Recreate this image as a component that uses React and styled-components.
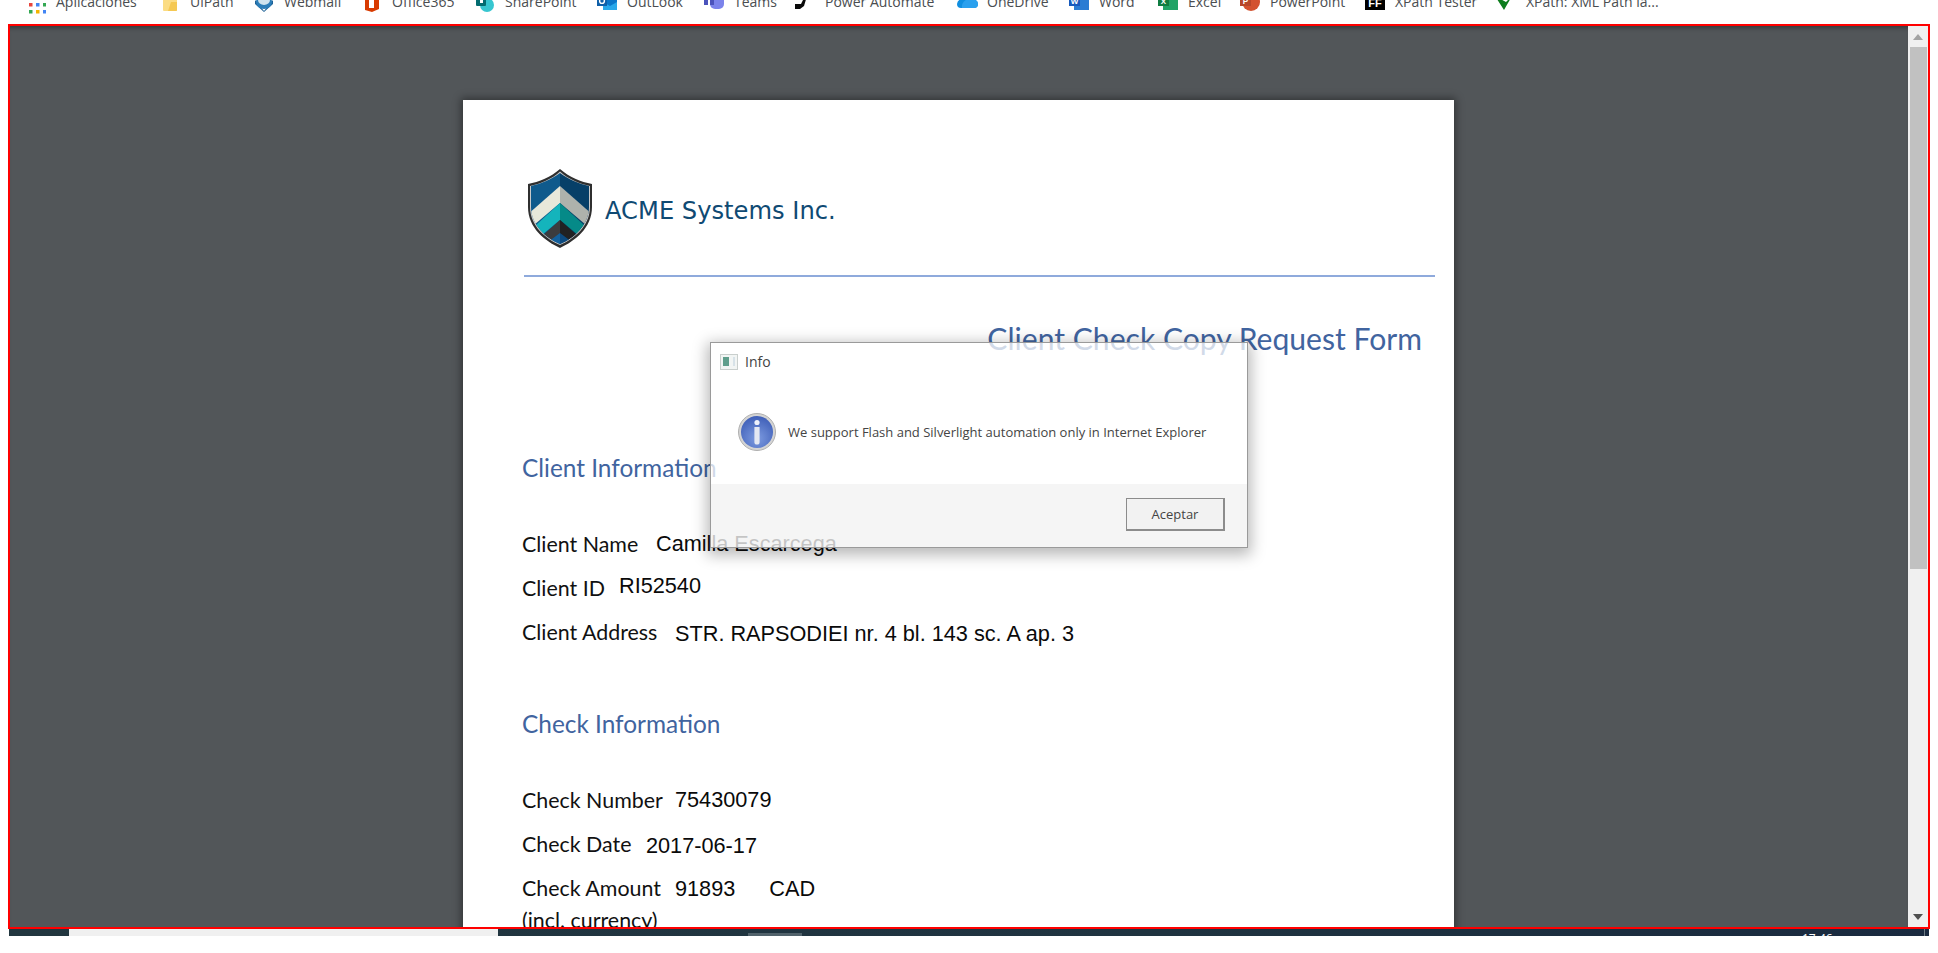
import React from 'react';
import styled, { createGlobalStyle } from 'styled-components';

const Global = createGlobalStyle`
  html, body {
    margin: 0;
    height: 953px;
    overflow: hidden;
    background: #ffffff;
  }
`;

const Screen = styled.div`
  width: 1938px;
  height: 953px;
  display: flex;
  flex-direction: column;
  background: #ffffff;
`;

/* ---------- bookmarks bar (cut at the top of the capture) ---------- */

const Bookmarks = styled.div`
  height: 24px;
  flex: none;
  overflow: hidden;
  display: flex;
  align-items: flex-end;
  padding: 0 0 12px 29px;
  box-sizing: border-box;
`;

const Bookmark = styled.div`
  flex: none;
  width: ${(p) => p.$w}px;
  display: flex;
  align-items: flex-end;
  gap: ${(p) => p.$gap || 10}px;
  font: 14px/20px 'Open Sans', sans-serif;
  color: #4a4d50;
  white-space: nowrap;
  svg { flex: none; margin-bottom: -2px; }
`;

const Apps = () => (
  <svg width="17" height="18" viewBox="0 0 17 18">
    {[['#e8453c', 0, 0], ['#f4b400', 7, 0], ['#f4b400', 14, 0], ['#e8453c', 0, 7], ['#4285f4', 7, 7], ['#34a853', 14, 7], ['#34a853', 0, 14], ['#f4b400', 7, 14], ['#4285f4', 14, 14]].map(([c, x, y]) => (
      <rect key={x + '-' + y} x={x} y={y} width="3.5" height="3.5" fill={c} />
    ))}
  </svg>
);
const Folder = () => (
  <svg width="16" height="18" viewBox="0 0 16 18"><path d="M1 0h14v14a1 1 0 0 1-1 1H2a1 1 0 0 1-1-1z" fill="#fbdc83" /><path d="M9 6h6v8a1 1 0 0 1-1 1H6z" fill="#f5c852" /></svg>
);
const Webmail = () => (
  <svg width="20" height="18" viewBox="0 0 20 18"><path d="M1 4l9 11 9-11v4l-9 8-9-8z" fill="#1c5f94" /><ellipse cx="10" cy="6" rx="8" ry="7" fill="#2b7db8" /><ellipse cx="10" cy="4" rx="6" ry="5" fill="#cfe3ee" /></svg>
);
const Office = () => (
  <svg width="16" height="18" viewBox="0 0 16 18"><path d="M1 0h14v13l-7 3-7-2z" fill="#d83b01" /><path d="M5 0h5v12H5z" fill="#ffffff" /></svg>
);
const SharePoint = () => (
  <svg width="20" height="18" viewBox="0 0 20 18"><circle cx="12" cy="9" r="7" fill="#37c6d0" /><rect x="1" y="0" width="10" height="10" rx="1" fill="#036c70" /><rect x="5" y="3" width="3" height="4" fill="#ffffff" /></svg>
);
const Outlook = () => (
  <svg width="20" height="18" viewBox="0 0 20 18"><rect x="6" y="0" width="14" height="14" fill="#0a76c9" /><path d="M6 6l7 4 7-4v8H6z" fill="#28a8ea" /><rect x="0" y="0" width="10" height="10" fill="#0f5fa8" /><circle cx="5" cy="5" r="2.4" fill="none" stroke="#fff" strokeWidth="1.4" /></svg>
);
const Teams = () => (
  <svg width="20" height="18" viewBox="0 0 20 18"><path d="M6 0h14v8a5 5 0 0 1-5 5h-4a5 5 0 0 1-5-5z" fill="#7b83eb" /><rect x="0" y="0" width="10" height="9" fill="#4b53bc" /><rect x="4" y="2" width="2" height="7" fill="#ffffff" /></svg>
);
const Automate = () => (
  <svg width="20" height="18" viewBox="0 0 20 18"><path d="M0 8h6l4-8h2L9 10 5 13H0z" fill="#0a0a0a" /><rect x="14" y="0" width="5" height="2" fill="#9aa0a6" /></svg>
);
const OneDrive = () => (
  <svg width="21" height="18" viewBox="0 0 21 18"><path d="M0 8a6 6 0 0 1 6-5h9a6 6 0 0 1 6 5 4 4 0 0 1-4 4H4a4 4 0 0 1-4-4z" fill="#0f8ee0" /><path d="M5 12a8 8 0 0 1 12-8h1a4 4 0 0 1 3 4 4 4 0 0 1-4 4z" fill="#2aa0ee" /></svg>
);
const Sheet = ({ back, front, letter }) => (
  <svg width="20" height="18" viewBox="0 0 20 18">
    <rect x="5" y="0" width="15" height="14" fill={back} />
    <rect x="0" y="0" width="11" height="10" fill={front} />
    <text x="5.5" y="8" fontSize="8" fontWeight="700" fontFamily="Liberation Sans, sans-serif" textAnchor="middle" fill="#fff">{letter}</text>
  </svg>
);
const Powerpoint = () => (
  <svg width="20" height="18" viewBox="0 0 20 18"><circle cx="11" cy="6" r="9" fill="#d35230" /><rect x="0" y="0" width="11" height="10" fill="#b7472a" /><text x="5.5" y="8" fontSize="8" fontWeight="700" fontFamily="Liberation Sans, sans-serif" textAnchor="middle" fill="#fff">P</text></svg>
);
const FF = () => (
  <svg width="20" height="18" viewBox="0 0 20 18"><rect width="20" height="14" fill="#000" /><text x="10" y="11" fontSize="11" fontWeight="700" fontFamily="Liberation Sans, sans-serif" textAnchor="middle" fill="#fff">FF</text></svg>
);
const Leaf = () => (
  <svg width="19" height="18" viewBox="0 0 19 18"><path d="M0 0l9 14L17 0l-6 6z" fill="#0d7d1d" /></svg>
);

const bookmarks = [
  { icon: <Apps />, text: 'Aplicaciones', w: 133 },
  { icon: <Folder />, text: 'UiPath', w: 92, gap: 12 },
  { icon: <Webmail />, text: 'Webmail', w: 110 },
  { icon: <Office />, text: 'Office365', w: 111, gap: 12 },
  { icon: <SharePoint />, text: 'SharePoint', w: 122 },
  { icon: <Outlook />, text: 'OutLook', w: 107 },
  { icon: <Teams />, text: 'Teams', w: 91 },
  { icon: <Automate />, text: 'Power Automate', w: 162 },
  { icon: <OneDrive />, text: 'OneDrive', w: 112, gap: 9 },
  { icon: <Sheet back="#2b7cd3" front="#185abd" letter="W" />, text: 'Word', w: 89 },
  { icon: <Sheet back="#21a366" front="#107c41" letter="X" />, text: 'Excel', w: 82 },
  { icon: <Powerpoint />, text: 'PowerPoint', w: 125 },
  { icon: <FF />, text: 'XPath Tester', w: 130 },
  { icon: <Leaf />, text: 'XPath: XML Path la...', w: 150, gap: 12 },
];

/* ---------- red frame with the pdf viewer ---------- */

const Frame = styled.div`
  flex: none;
  width: 1922px;
  height: 905px;
  margin-left: 8px;
  box-sizing: border-box;
  border: 2px solid #ff0000;
  display: flex;
  position: relative;
  overflow: hidden;
`;

const Viewer = styled.div`
  flex: 1;
  background: #525659;
  box-shadow: inset 0 5px 4px -3px rgba(0, 0, 0, 0.35);
  overflow: hidden;
  display: flex;
  justify-content: center;
  align-items: flex-start;
`;

const Paper = styled.div`
  flex: none;
  width: 991px;
  height: 1300px;
  margin: 74px 1px 0 0;
  padding: 69px 0 0 59px;
  box-sizing: border-box;
  background: #ffffff;
  box-shadow: 0 0 8px 2px rgba(0, 0, 0, 0.4);
`;

const Brand = styled.div`
  display: flex;
  align-items: center;
  gap: 12px;
  margin-left: 5px;
  height: 79px;
`;

const BrandName = styled.div`
  font: 24.2px 'DejaVu Sans', sans-serif;
  color: #0f4a73;
  margin-top: 4px;
`;

const Rule = styled.div`
  width: 911px;
  height: 2px;
  margin: 27px 0 0 2px;
  background: #8faadc;
`;

const FormTitle = styled.div`
  width: 900px;
  margin-top: 43px;
  text-align: right;
  font: 400 30.1px/36px Lato, sans-serif;
  color: #41649f;
`;

const SectionTitle = styled.div`
  margin-top: ${(p) => p.$top}px;
  font: 400 24.4px/30px Lato, sans-serif;
  color: #41649f;
`;

const Row = styled.div`
  display: flex;
  align-items: flex-start;
  height: ${(p) => p.$h || 44}px;
  margin-top: ${(p) => p.$top || 0}px;
`;

const Label = styled.div`
  width: ${(p) => p.$w}px;
  flex: none;
  font: 21.4px/30px Lato, sans-serif;
  color: #111111;
  white-space: nowrap;
`;

const LabelNote = styled.span`
  display: block;
  margin-top: 2px;
`;

const Value = styled.div`
  font: 21.7px/24px 'Liberation Sans', sans-serif;
  color: #0a0a0a;
  white-space: nowrap;
  margin-top: ${(p) => p.$lift || 0}px;
`;

const Currency = styled.span`
  margin-left: 34px;
`;

/* ---------- scrollbar ---------- */

const Scrollbar = styled.div`
  flex: none;
  width: 20px;
  background: #f0f0f0;
  display: flex;
  flex-direction: column;
  align-items: center;
`;

const ArrowBox = styled.div`
  flex: none;
  height: 21px;
  display: flex;
  align-items: center;
  justify-content: center;
  margin-top: ${(p) => (p.$bottom ? 'auto' : 0)};
`;

const Thumb = styled.div`
  flex: none;
  width: 17px;
  height: 522px;
  background: #c1c1c1;
`;

const Arrow = ({ down }) => (
  <svg width="10" height="6" viewBox="0 0 10 6">
    <path d={down ? 'M0 0h10L5 6z' : 'M0 6h10L5 0z'} fill={down ? '#505050' : '#a3a3a3'} />
  </svg>
);

/* ---------- message box ---------- */

const Dialog = styled.div`
  position: absolute;
  left: 700px;
  top: 316px;
  width: 538px;
  height: 206px;
  box-sizing: border-box;
  border: 1px solid #9a9a9a;
  box-shadow: 0 4px 14px 3px rgba(0, 0, 0, 0.28);
  display: flex;
  flex-direction: column;
  font-family: 'Open Sans', sans-serif;
  color: #444444;
`;

const DialogBody = styled.div`
  flex: 1;
  background: rgba(255, 255, 255, 0.76);
  padding: 10px 0 0 9px;
`;

const DialogTitle = styled.div`
  display: flex;
  align-items: center;
  gap: 7px;
  font-size: 14px;
  line-height: 18px;
`;

const Message = styled.div`
  display: flex;
  align-items: center;
  gap: 12px;
  margin: 42px 0 0 18px;
  font-size: 13px;
`;

const DialogFooter = styled.div`
  flex: none;
  height: 63px;
  background: rgba(242, 242, 242, 0.8);
  display: flex;
  justify-content: flex-end;
  align-items: flex-start;
  padding: 14px 22px 0 0;
  box-sizing: border-box;
`;

const AcceptButton = styled.button`
  width: 99px;
  height: 33px;
  box-sizing: border-box;
  border: 1px solid #8c8c8c;
  border-right-width: 2px;
  border-bottom-width: 2px;
  background: #f2f2f2;
  font: 13px 'Open Sans', sans-serif;
  color: #444444;
  padding: 0;
`;

const WindowIcon = () => (
  <svg width="18" height="16" viewBox="0 0 18 16">
    <rect x="0.5" y="0.5" width="17" height="15" fill="#f2f5f4" stroke="#c9cfcd" />
    <rect x="3" y="3" width="6" height="9" fill="#5f9e8c" />
    <rect x="13" y="3" width="2" height="9" fill="#d7e2e8" />
  </svg>
);

const InfoIcon = () => (
  <svg width="38" height="38" viewBox="0 0 38 38">
    <defs>
      <radialGradient id="infoFill" cx="50%" cy="70%" r="70%">
        <stop offset="0" stopColor="#7d9be0" />
        <stop offset="1" stopColor="#3f5fb8" />
      </radialGradient>
    </defs>
    <circle cx="19" cy="19" r="18.5" fill="#d4d4d4" stroke="#b0b0b0" />
    <circle cx="19" cy="19" r="16" fill="url(#infoFill)" />
    <circle cx="19" cy="9.5" r="2.6" fill="#eef2fb" />
    <path d="M16.4 14h5.2v15a2.6 2.6 0 0 1-5.2 0z" fill="#e4e8f2" />
  </svg>
);

/* ---------- taskbar, only a sliver of it shows ---------- */

const Taskbar = styled.div`
  flex: none;
  width: 1920px;
  height: 7px;
  margin-left: 9px;
  display: flex;
  overflow: hidden;
  background: linear-gradient(90deg, #22363f, #1f3340 60%, #1a2a40);
`;

const SearchBox = styled.div`
  flex: none;
  width: 429px;
  margin-left: 60px;
  background: #f0f0f0;
`;

const TaskThumb = styled.div`
  flex: none;
  width: 54px;
  height: 3px;
  margin: 4px 0 0 250px;
  background: #51626b;
`;

const Clock = styled.div`
  flex: none;
  margin: 3px 0 0 1000px;
  font: 12px/14px 'Open Sans', sans-serif;
  color: #ffffff;
`;

const DesktopEdge = styled.div`
  flex: none;
  width: 1px;
  margin-left: 91px;
  background: #6d7a84;
`;

const App = () => {
  return (
    <Screen>
      <Global />
      <Bookmarks>
        {bookmarks.map((b) => (
          <Bookmark key={b.text} $w={b.w} $gap={b.gap}>
            {b.icon}
            <span>{b.text}</span>
          </Bookmark>
        ))}
      </Bookmarks>
      <Frame>
        <Viewer>
          <Paper>
            <Brand>
              <svg width="66" height="79" viewBox="0 0 66 79">
                <defs>
                  <clipPath id="shieldClip">
                    <path d="M33 4C25 10 14 15 4 17v21c0 18 15 31 29 37 14-6 29-19 29-37V17C52 15 41 10 33 4z" />
                  </clipPath>
                </defs>
                <path d="M33 0C24 8 12 13 1 15v23c0 21 17 34 32 41 15-7 32-20 32-41V15C54 13 42 8 33 0z" fill="#2f2f2f" />
                <path d="M33 2.500C25 10 13 15 3 17v21c0 19 16 32 30 38 14-6 30-19 30-38V17C53 15 41 10 33 2.500z" fill="#c9c9c9" />
                <g clipPath="url(#shieldClip)">
                  <rect x="0" y="0" width="33" height="79" fill="#0f5a8c" />
                  <rect x="33" y="0" width="33" height="79" fill="#063f68" />
                  <path d="M33 17L0 46v16L33 34z" fill="#e8e8da" />
                  <path d="M33 17l33 29v16L33 34z" fill="#aeb2ac" />
                  <path d="M33 34L8 57l7 9 18-15z" fill="#14b4bc" />
                  <path d="M33 34l25 23-7 9-18-15z" fill="#058a88" />
                  <path d="M33 51L15 67l6 6 12-8z" fill="#3c3c3e" />
                  <path d="M33 51l18 16-6 6-12-8z" fill="#212123" />
                  <path d="M33 64l-12 9 12 6z" fill="#14609c" />
                  <path d="M33 64l12 9-12 6z" fill="#0c4a80" />
                </g>
              </svg>
              <BrandName>ACME Systems Inc.</BrandName>
            </Brand>
            <Rule />
            <FormTitle>Client Check Copy Request Form</FormTitle>
            <SectionTitle $top={97}>Client Information</SectionTitle>
            <Row $top={46}>
              <Label $w={134}>Client Name</Label>
              <Value $lift={3}>Camilla Escarcega</Value>
            </Row>
            <Row>
              <Label $w={97}>Client ID</Label>
              <Value $lift={1}>RI52540</Value>
            </Row>
            <Row>
              <Label $w={153}>Client Address</Label>
              <Value $lift={5}>STR. RAPSODIEI nr. 4 bl. 143 sc. A ap. 3</Value>
            </Row>
            <SectionTitle $top={48}>Check Information</SectionTitle>
            <Row $top={46}>
              <Label $w={153}>Check Number</Label>
              <Value $lift={3}>75430079</Value>
            </Row>
            <Row>
              <Label $w={124}>Check Date</Label>
              <Value $lift={5}>2017-06-17</Value>
            </Row>
            <Row $h={90}>
              <Label $w={153}>Check Amount<LabelNote>(incl. currency)</LabelNote></Label>
              <Value $lift={4}>91893<Currency>CAD</Currency></Value>
            </Row>
          </Paper>
        </Viewer>
        <Scrollbar>
          <ArrowBox><Arrow /></ArrowBox>
          <Thumb />
          <ArrowBox $bottom><Arrow down /></ArrowBox>
        </Scrollbar>
        <Dialog>
          <DialogBody>
            <DialogTitle><WindowIcon />Info</DialogTitle>
            <Message><InfoIcon />We support Flash and Silverlight automation only in Internet Explorer</Message>
          </DialogBody>
          <DialogFooter>
            <AcceptButton>Aceptar</AcceptButton>
          </DialogFooter>
        </Dialog>
      </Frame>
      <Taskbar>
        <SearchBox />
        <TaskThumb />
        <Clock>17:46</Clock>
        <DesktopEdge />
      </Taskbar>
    </Screen>
  );
};

export default App;
